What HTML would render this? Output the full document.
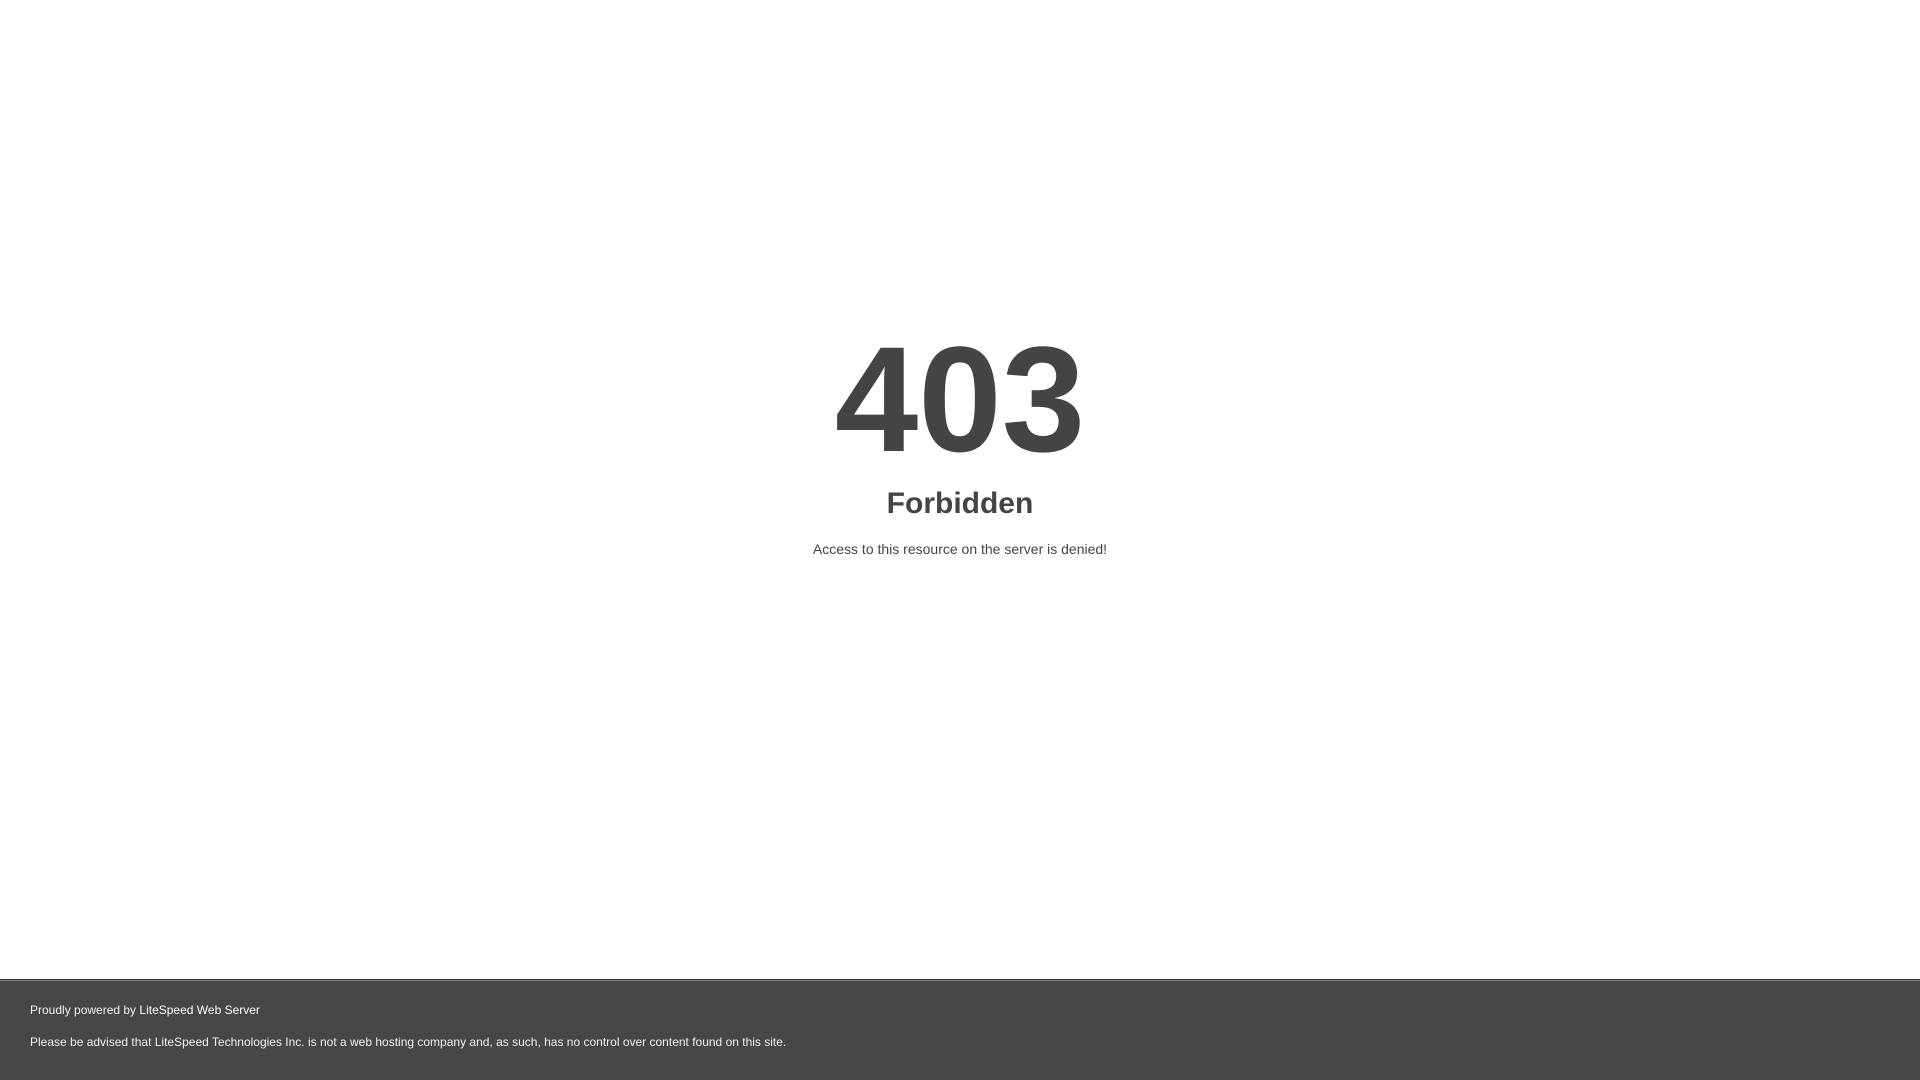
<!DOCTYPE html>
<html style="height:100%">
<head><meta charset="utf-8"><title>403 Forbidden</title></head>
<body style="color:#444;margin:0;font:normal 14px/20px 'Liberation Sans',Arial,Helvetica,sans-serif;height:100%;background-color:#fff;">
<div style="height:auto;min-height:100%;">
<div style="text-align:center;width:800px;margin-left:-400px;position:absolute;top:30%;left:50%;">
<h1 style="margin:0;font-size:150px;line-height:150px;font-weight:bold;">403</h1>
<h2 style="margin-top:20px;font-size:30px;">Forbidden</h2>
<p>Access to this resource on the server is denied!</p>
</div></div>
<div style="color:#f0f0f0;font-size:12px;margin:auto;padding:0 30px;position:relative;clear:both;height:100px;margin-top:-101px;background-color:#474747;border-top:1px solid rgba(0,0,0,0.15);box-shadow:0 1px 0 rgba(255,255,255,0.3) inset;">
<br>Proudly powered by <span style="color:#fff;">LiteSpeed Web Server</span><p>Please be advised that LiteSpeed Technologies Inc. is not a web hosting company and, as such, has no control over content found on this site.</p></div>
</body>
</html>
